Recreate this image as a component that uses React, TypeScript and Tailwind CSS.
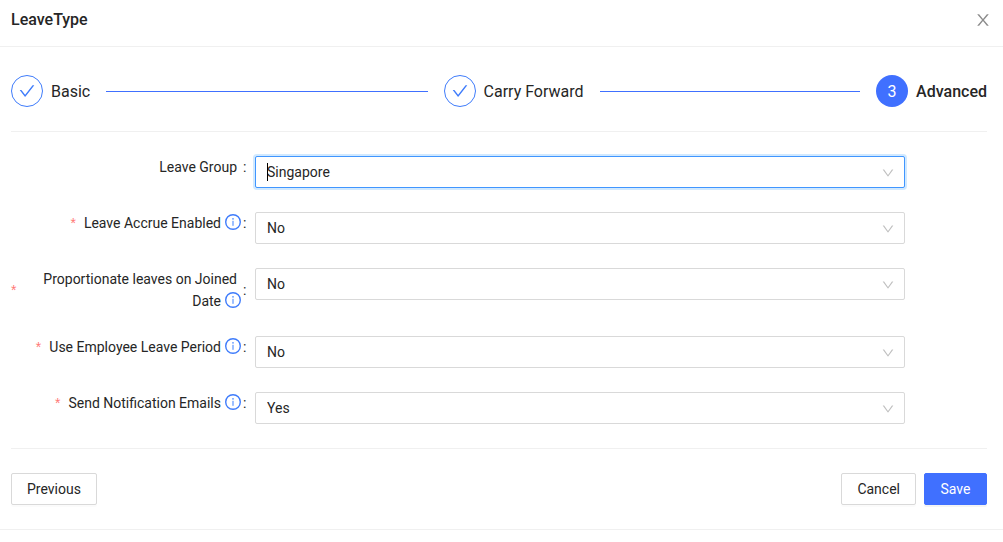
import { useState } from "react";
import { AiOutlineCheck, AiOutlineDown } from "react-icons/ai";

type Field = {
  id: string;
  label: string;
  options: string[];
  required?: boolean;
};

const fields: Field[] = [
  { id: "leave-group", label: "Leave Group", options: ["Singapore"] },
  { id: "accrue", label: "Leave Accrue Enabled", options: ["No", "Yes"], required: true },
  { id: "proportionate", label: "Proportionate leaves on Joined Date", options: ["No", "Yes"], required: true },
  { id: "leave-period", label: "Use Employee Leave Period", options: ["No", "Yes"], required: true },
  { id: "emails", label: "Send Notification Emails", options: ["Yes", "No"], required: true },
];

function CloseIcon() {
  return (
    <svg viewBox="64 64 896 896" className="size-4" fill="currentColor" aria-hidden="true">
      <path d="M563.8 512l262.5-312.9c4.4-5.2.7-13.1-6.1-13.1h-79.8c-4.7 0-9.2 2.1-12.3 5.7L511.6 449.8 295.1 191.7c-3-3.6-7.5-5.7-12.3-5.7H203c-6.8 0-10.5 7.9-6.1 13.1L459.4 512 196.9 824.9A7.95 7.95 0 0 0 203 838h79.8c4.7 0 9.2-2.1 12.3-5.7l216.5-258.1 216.5 258.1c3 3.6 7.5 5.7 12.3 5.7h79.8c6.8 0 10.5-7.9 6.1-13.1L563.8 512z" />
    </svg>
  );
}

function InfoIcon() {
  return (
    <svg viewBox="0 0 16 16" className="-mr-1 ml-1 inline size-4 align-[-2px]" aria-hidden="true">
      <circle cx="8" cy="8" r="7.3" fill="none" stroke="#3f7cfb" strokeWidth="1.4" />
      <circle cx="8" cy="4.8" r="0.9" fill="#5c95ff" />
      <rect x="7.4" y="6.8" width="1.2" height="5" fill="#5c95ff" />
    </svg>
  );
}

function DoneStep({ title }: { title: string }) {
  return (
    <li className="flex flex-1 items-center">
      <span className="flex size-8 shrink-0 items-center justify-center rounded-full border border-[#3f7cfb] text-[#3f7cfb]">
        <AiOutlineCheck className="size-[18px]" />
      </span>
      <span className="ml-2 h-8 leading-[34px] whitespace-nowrap">{title}</span>
      <span className="ml-4 h-px flex-1 bg-[#4070ff]" />
    </li>
  );
}

function FormRow({ field, active }: { field: Field; active: boolean }) {
  const [value, setValue] = useState(field.options[0]);
  return (
    <div className="flex items-start">
      <div className="flex w-1/4 items-center justify-end">
        {field.required && <span className="mr-2 font-['Liberation_Sans',sans-serif] text-[#ff7875]">*</span>}
        <label htmlFor={field.id} className="text-right">
          {field.label}
          {field.required && <InfoIcon />}
        </label>
        <span className="mr-2 w-[10px] shrink-0 pl-[6px]">:</span>
      </div>
      <div className="relative w-[66.6%]">
        <select
          id={field.id}
          value={value}
          onChange={(e) => setValue(e.target.value)}
          className={
            active
              ? "block h-8 w-full appearance-none rounded-xs border border-[#4096ff] bg-white px-[11px] shadow-[0_0_0_2px_rgba(24,144,255,0.2)] outline-none"
              : "block h-8 w-full appearance-none rounded-xs border border-[#d9d9d9] bg-white px-[11px] outline-none"
          }
        >
          {field.options.map((o) => (
            <option key={o}>{o}</option>
          ))}
        </select>
        {active && <span className="absolute top-[7px] left-3 h-[18px] w-px bg-black" />}
        <AiOutlineDown className="pointer-events-none absolute top-[10px] right-[10px] size-[14px] text-[#bfbfbf]" />
      </div>
    </div>
  );
}

export default function App() {
  return (
    <div className="bg-white font-[Roboto,sans-serif] text-sm leading-[22px] text-[#262626]">
      <header className="flex items-center justify-between border-b border-[#f0f0f0] pt-2 pr-3 pb-[14px] pl-[11px]">
        <h1 className="text-base leading-6 font-medium">LeaveType</h1>
        <button type="button" aria-label="Close" className="text-[#8c8c8c]">
          <CloseIcon />
        </button>
      </header>
      <main className="border-b border-[#f0f0f0] pt-7 pr-4 pb-6 pl-[11px]">
        <ol className="flex items-center gap-4 text-base leading-8">
          <DoneStep title="Basic" />
          <DoneStep title="Carry Forward" />
          <li className="flex items-center">
            <span className="flex size-8 justify-center rounded-full bg-[#4070ff] leading-[34px] text-white">3</span>
            <span className="ml-2 h-8 leading-[34px] font-medium">Advanced</span>
          </li>
        </ol>
        <form className="mt-6" onSubmit={(e) => e.preventDefault()}>
          <div className="flex flex-col gap-6 border-y border-[#f0f0f0] py-6">
            {fields.map((field, i) => (
              <FormRow key={field.id} field={field} active={i === 0} />
            ))}
          </div>
          <div className="mt-6 flex gap-2">
            <button type="button" className="mr-auto h-8 rounded-xs border border-[#d9d9d9] px-[15px] shadow-[0_2px_0_rgba(0,0,0,0.015)]">
              Previous
            </button>
            <button type="button" className="h-8 rounded-xs border border-[#d9d9d9] px-[15px] shadow-[0_2px_0_rgba(0,0,0,0.015)]">
              Cancel
            </button>
            <button type="submit" className="h-8 min-w-[63px] rounded-xs border border-[#4070ff] bg-[#4070ff] px-[15px] text-white shadow-[0_2px_0_rgba(0,0,0,0.045)]">
              Save
            </button>
          </div>
        </form>
      </main>
    </div>
  );
}
